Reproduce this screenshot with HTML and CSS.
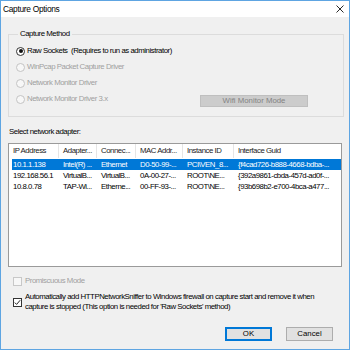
FILE: index.html
```html
<!DOCTYPE html>
<html lang="en">
<head>
    <meta charset="UTF-8">
    <title>Capture Options</title>
    <link rel="stylesheet" href="styles.css">
</head>
<body>
    <div class="window">
        <div class="titlebar">
            <span class="title">Capture Options</span>
            <svg class="close" width="8" height="8" viewBox="0 0 8 8">
                <path d="M0.5 0.5 L7.5 7.5 M7.5 0.5 L0.5 7.5" stroke="#111" stroke-width="0.9" fill="none"/>
            </svg>
        </div>

        <div class="content">
            <fieldset class="group">
                <legend>Capture Method</legend>
                <div class="radio-row">
                    <span class="radio checked"></span>
                    <span>Raw Sockets&nbsp; (Requires to run as administrator)</span>
                </div>
                <div class="radio-row disabled">
                    <span class="radio"></span>
                    <span>WinPcap Packet Capture Driver</span>
                </div>
                <div class="radio-row disabled">
                    <span class="radio"></span>
                    <span>Network Monitor Driver</span>
                </div>
                <div class="radio-row disabled">
                    <span class="radio"></span>
                    <span>Network Monitor Driver 3.x</span>
                    <button class="wifi-btn" disabled>Wifi Monitor Mode</button>
                </div>
            </fieldset>

            <div class="list-label">Select network adapter:</div>

            <div class="listview">
                <div class="lv-row lv-header">
                    <span>IP Address</span>
                    <span>Adapter...</span>
                    <span>Connec...</span>
                    <span>MAC Addr...</span>
                    <span>Instance ID</span>
                    <span>Interface Guid</span>
                </div>
                <div class="lv-row selected">
                    <span>10.1.1.138</span>
                    <span>Intel(R) ...</span>
                    <span>Ethernet</span>
                    <span>D0-50-99-...</span>
                    <span>PCI\VEN_8...</span>
                    <span>{f4cad726-b888-4668-bdba-...</span>
                </div>
                <div class="lv-row">
                    <span>192.168.56.1</span>
                    <span>VirtualB...</span>
                    <span>VirtualB...</span>
                    <span>0A-00-27-...</span>
                    <span>ROOT\NE...</span>
                    <span>{392a9861-cbda-457d-ad0f-...</span>
                </div>
                <div class="lv-row">
                    <span>10.8.0.78</span>
                    <span>TAP-Wi...</span>
                    <span>Etherne...</span>
                    <span>00-FF-93-...</span>
                    <span>ROOT\NE...</span>
                    <span>{93b698b2-e700-4bca-a477...</span>
                </div>
            </div>

            <div class="check-row disabled">
                <span class="box"></span>
                <span>Promiscuous Mode</span>
            </div>
            <div class="check-row">
                <span class="box">
                    <svg width="7" height="7" viewBox="0 0 7 7">
                        <path d="M0.8 3.6 L2.6 5.4 L6.2 1.2" stroke="#222" stroke-width="1" fill="none"/>
                    </svg>
                </span>
                <span>Automatically add HTTPNetworkSniffer to Windows firewall on capture start and remove it when capture is stopped (This option is needed for 'Raw Sockets' method)</span>
            </div>

            <div class="buttons">
                <button class="btn default">OK</button>
                <button class="btn">Cancel</button>
            </div>
        </div>
    </div>
</body>
</html>
```

FILE: styles.css
```css
:root {
    --border-blue: #5ea5e2;
    --face: #f0f0f0;
    --disabled-text: #a0a0a0;
    --select-blue: #0078d7;
}

body {
    margin: 0;
    padding: 0;
    background-color: white;
    font-family: "Liberation Sans", Arial, sans-serif;
    font-size: 7.8px;
    letter-spacing: -0.45px;
    line-height: 10px;
    color: #000;
}

.window {
    width: 350px;
    height: 350px;
    box-sizing: border-box;
    border: 1px solid var(--border-blue);
    display: flex;
    flex-direction: column;
}

.titlebar {
    height: 16px;
    background-color: white;
    display: flex;
    align-items: center;
    padding: 0 5px 0 2px;
}

.title {
    flex: 1;
    font-size: 8.4px;
    letter-spacing: -0.3px;
}

.close {
    display: block;
}

.content {
    flex: 1;
    background-color: var(--face);
    padding-top: 12px;
}

/* capture method group */
.group {
    margin: 0 5px 0 7px;
    padding: 4px 0 9px 7px;
    border: 1px solid #dcdcdc;
}

.group legend {
    padding: 0 2px;
    margin-left: 2px;
}

.radio-row {
    height: 16px;
    display: flex;
    align-items: center;
    gap: 2px;
}

.radio-row.disabled {
    color: var(--disabled-text);
}

.radio {
    width: 9px;
    height: 9px;
    box-sizing: border-box;
    border-radius: 50%;
    border: 1px solid #333;
    background-color: white;
    position: relative;
}

.radio.checked::after {
    content: "";
    position: absolute;
    left: 1.5px;
    top: 1.5px;
    width: 4px;
    height: 4px;
    border-radius: 50%;
    background-color: #111;
}

.radio-row.disabled .radio {
    border-color: #c4c4c4;
    background-color: #f7f7f7;
}

.wifi-btn {
    margin-left: auto;
    margin-right: 35px;
    margin-top: 4px;
    width: 108px;
    height: 12px;
    padding: 0;
    font: inherit;
    color: #838383;
    background-color: #cccccc;
    border: 1px solid #bfbfbf;
}

.list-label {
    margin: 10px 0 6px 8px;
}

/* adapter list */
.listview {
    margin: 0 7px 0 7px;
    height: 124px;
    box-sizing: border-box;
    border: 1px solid #9a9a9a;
    background-color: white;
    padding-left: 3px;
}

.lv-row {
    display: grid;
    grid-template-columns: 47px 38px 39px 47px 51px 104px;
    height: 11px;
    align-items: center;
}

.lv-row span {
    padding-left: 4px;
    white-space: nowrap;
    overflow: hidden;
}

.lv-row span:first-child {
    padding-left: 1px;
}

.lv-header {
    height: 14px;
    margin-bottom: 1px;
    color: #222;
}

.lv-header span {
    height: 14px;
    line-height: 14px;
    border-right: 1px solid #e5e5e5;
}

.lv-header span:last-child {
    border-right: none;
}

.lv-row.selected {
    background-color: var(--select-blue);
    color: white;
}

/* checkboxes */
.check-row {
    display: flex;
    align-items: center;
    gap: 3px;
    margin: 9px 20px 0 12px;
}

.check-row + .check-row {
    margin-top: 6px;
}

.check-row.disabled {
    color: var(--disabled-text);
}

.box {
    flex: none;
    width: 9px;
    height: 9px;
    box-sizing: border-box;
    border: 1px solid #333;
    background-color: white;
    display: flex;
    align-items: center;
    justify-content: center;
}

.check-row.disabled .box {
    border-color: #c8c8c8;
    background-color: #f7f7f7;
}

.buttons {
    display: flex;
    justify-content: flex-end;
    gap: 14px;
    margin-top: 15px;
    padding-right: 16px;
}

.btn {
    width: 47px;
    height: 14px;
    padding: 0;
    font: inherit;
    color: #000;
    background-color: #e1e1e1;
    border: 1px solid #adadad;
}

.btn.default {
    border: 2px solid var(--select-blue);
}
```
